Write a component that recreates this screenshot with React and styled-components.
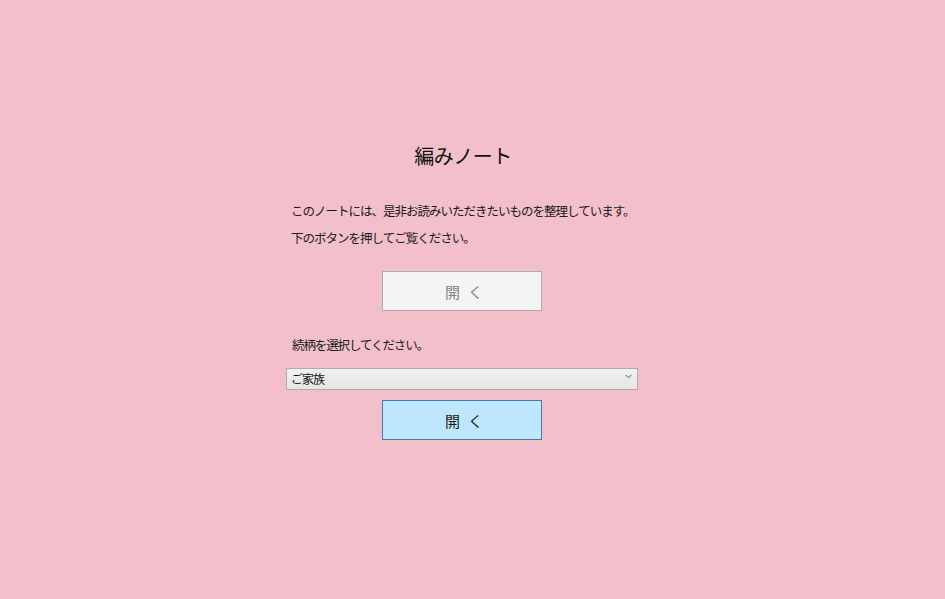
import React from 'react'
import styled, { createGlobalStyle } from 'styled-components'

const Global = createGlobalStyle`
  html, body {
    margin: 0;
    padding: 0;
    background: #f2bfca;
  }
  body {
    font-family: 'Noto Sans CJK JP', 'Noto Sans', sans-serif;
    color: #1a1a1a;
  }
`

const Page = styled.div`
  min-height: 599px;
  padding-top: 141px;
  box-sizing: border-box;
`

const Column = styled.div`
  width: 352px;
  margin-left: 286px;
  display: flex;
  flex-direction: column;
`

const Title = styled.h1`
  margin: 0;
  font-size: 20px;
  font-weight: 400;
  line-height: 30px;
  letter-spacing: -0.5px;
  text-align: center;
  padding-left: 2px;
  color: #111;
`

const Lead = styled.div`
  margin-top: 26px;
  padding-left: 5px;
`

const Line = styled.p`
  margin: 0;
  font-size: 12.5px;
  line-height: 27px;
  letter-spacing: -1px;
`

const Label = styled.p`
  margin: 24px 0 0;
  padding-left: 6px;
  font-size: 12.5px;
  line-height: 20px;
  letter-spacing: -1.1px;
`

const Button = styled.button`
  align-self: center;
  width: 160px;
  height: 40px;
  margin-top: ${p => p.$gap}px;
  box-sizing: border-box;
  border: 1px solid ${p => (p.$active ? '#3c7fb1' : '#adadad')};
  background: ${p => (p.$active ? '#bee6fd' : '#f4f4f4')};
  color: ${p => (p.$active ? '#1a1a1a' : '#838383')};
  font-family: 'Noto Sans CJK JP', sans-serif;
  font-size: 15px;
  letter-spacing: 8px;
  padding: 0 0 0 12px;
  cursor: ${p => (p.$active ? 'pointer' : 'default')};
`

const SelectWrap = styled.div`
  position: relative;
  margin-top: 10px;
  height: 22px;
`

const Select = styled.select`
  appearance: none;
  width: 100%;
  height: 22px;
  box-sizing: border-box;
  border: 1px solid #acacac;
  border-radius: 0;
  background: linear-gradient(#f0f0f0, #e5e5e5);
  font-family: 'Noto Sans CJK JP', sans-serif;
  font-size: 12px;
  letter-spacing: -1px;
  color: #111;
  padding: 0 20px 0 4px;
  outline: none;
`

const Chevron = styled.svg`
  position: absolute;
  right: 6px;
  top: 9px;
  pointer-events: none;
`

export default function App() {
  return (
    <Page>
      <Global />
      <Column>
        <Title>編みノート</Title>
        <Lead>
          <Line>このノートには、是非お読みいただきたいものを整理しています。</Line>
          <Line>下のボタンを押してご覧ください。</Line>
        </Lead>
        <Button $gap={20} disabled>開く</Button>
        <Label>続柄を選択してください。</Label>
        <SelectWrap>
          <Select defaultValue="family">
            <option value="family">ご家族</option>
            <option value="friend">ご友人</option>
          </Select>
          <Chevron width="7" height="5" viewBox="0 0 7 5">
            <path d="M0.5 0.8 L3.5 3.8 L6.5 0.8" fill="none" stroke="#555" strokeWidth="1" />
          </Chevron>
        </SelectWrap>
        <Button $gap={13} $active>開く</Button>
      </Column>
    </Page>
  )
}
